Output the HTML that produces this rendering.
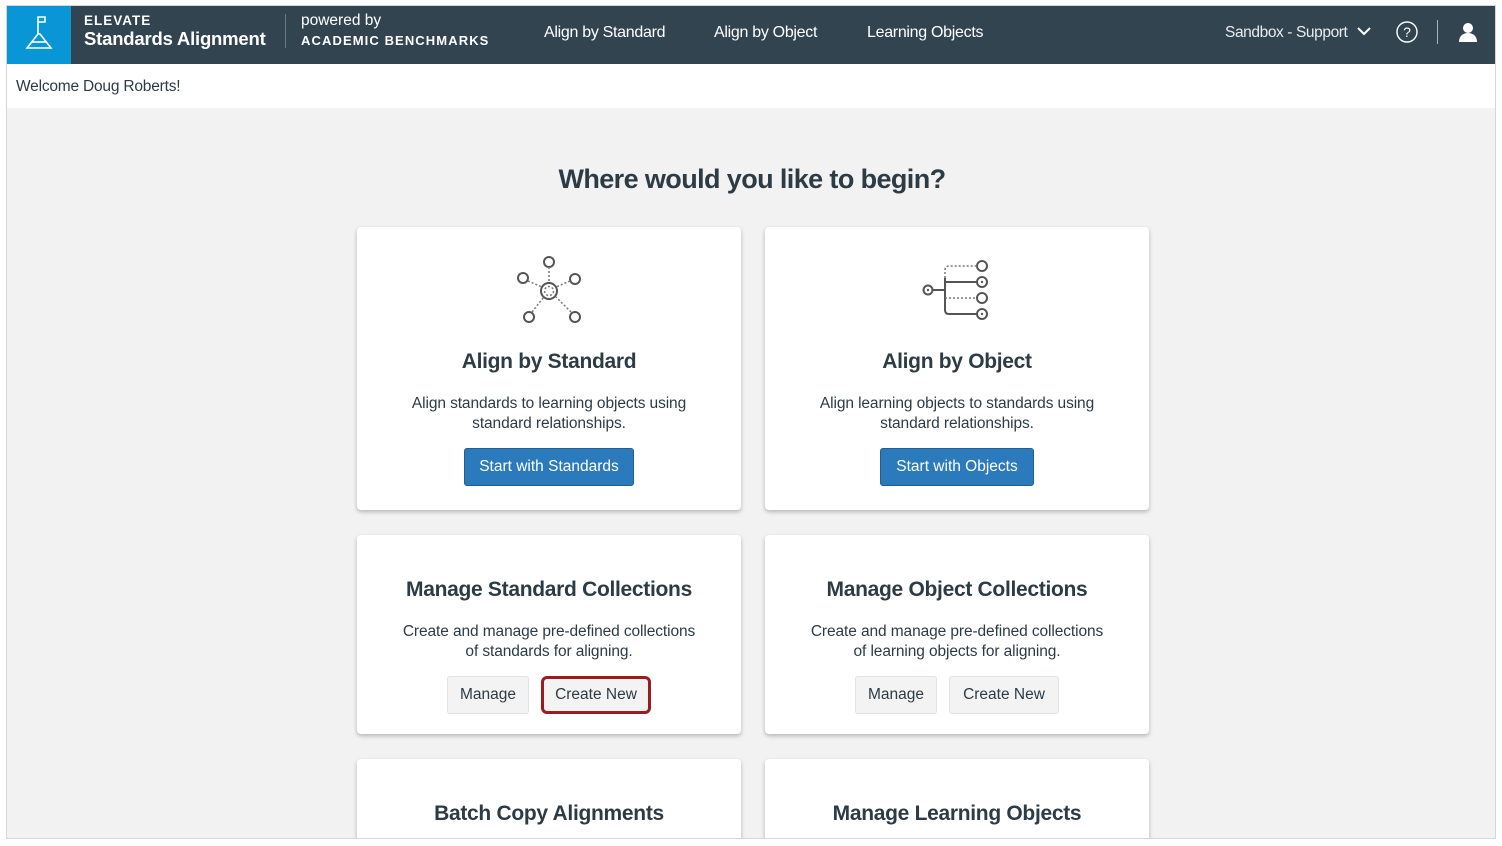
<!DOCTYPE html>
<html><head><meta charset="utf-8"><style>
*{box-sizing:border-box;margin:0;padding:0}
body{width:1502px;height:846px;background:#fff;font-family:"Liberation Sans",sans-serif;color:#2d3b45;position:relative;overflow:hidden}
.frame{position:absolute;left:6px;top:5px;width:1490px;height:834px;border:1px solid #d6d6d6;overflow:hidden;background:#f2f2f2}
.hdr{position:absolute;left:0;top:0;width:1490px;height:58px;background:#324450;color:#fff}
.logo{position:absolute;left:0;top:0;width:64px;height:58px;background:#0896d6}
.t{position:absolute;white-space:nowrap}
.welcome{position:absolute;left:0;top:58px;width:1490px;height:44px;background:#fff}
.card{position:absolute;background:#fff;border-radius:4px;box-shadow:0 2px 4px rgba(0,0,0,.25);text-align:center}
.card h2{position:absolute;left:0;right:0;font-size:21px;font-weight:bold;color:#2d3b45;letter-spacing:-.3px}
.card p{position:absolute;left:0;right:0;font-size:15.5px;line-height:19.5px;color:#2d3b45;letter-spacing:-.1px}
.btn{position:absolute;height:38px;border-radius:3px;font-size:15.5px;line-height:36px;text-align:center}
.blue{background:#2b7abc;color:#fff;border:1px solid #1f5f94}
.gray{background:#f3f3f3;color:#2d3b45;border:1px solid #e2e2e2}
</style></head><body>
<div class="frame">
 <div class="hdr">
  <div class="logo"><svg width="64" height="58" viewBox="0 0 64 58"><g fill="none" stroke="#fff" stroke-width="1.6"><path d="M31 28V11h7v5h-7"/><path d="M31 28L20 42h24L33 28z"/><path d="M24 36h16"/></g></svg></div>
  <div class="t" style="left:77px;top:7px;font-size:13.5px;font-weight:bold;letter-spacing:1px">ELEVATE</div>
  <div class="t" style="left:77px;top:22px;font-size:18.5px;font-weight:bold;letter-spacing:-.2px">Standards Alignment</div>
  <div style="position:absolute;left:278px;top:8px;width:1px;height:34px;background:#6b7a85"></div>
  <div class="t" style="left:294px;top:6px;font-size:15.5px">powered by</div>
  <div class="t" style="left:294px;top:27px;font-size:13px;font-weight:bold;letter-spacing:1.1px">ACADEMIC BENCHMARKS</div>
  <div class="t" style="left:537px;top:18px;font-size:16px;letter-spacing:-.3px">Align by Standard</div>
  <div class="t" style="left:707px;top:18px;font-size:16px;letter-spacing:-.3px">Align by Object</div>
  <div class="t" style="left:860px;top:18px;font-size:16px;letter-spacing:-.3px">Learning Objects</div>
  <div class="t" style="left:1218px;top:18px;font-size:15.5px;color:#e8ecef;letter-spacing:-.4px">Sandbox - Support</div>
  <svg style="position:absolute;left:1349px;top:19px" width="16" height="12"><path d="M2 3l6 6 6-6" fill="none" stroke="#fff" stroke-width="2"/></svg>
  <svg style="position:absolute;left:1388px;top:14px" width="24" height="24"><circle cx="12" cy="12" r="10" fill="none" stroke="#fff" stroke-width="1.4"/><text x="12" y="17" font-size="14" fill="#fff" text-anchor="middle" font-family="Liberation Sans">?</text></svg>
  <div style="position:absolute;left:1430px;top:14px;width:1px;height:24px;background:#aab4bb"></div>
  <svg style="position:absolute;left:1450px;top:15px" width="22" height="22"><circle cx="11" cy="7" r="5" fill="#fff"/><path d="M2 21c0-6 4-9 9-9s9 3 9 9z" fill="#fff"/></svg>
 </div>
 <div class="welcome"><div class="t" style="left:9px;top:14px;font-size:15.5px;color:#2d3b45;letter-spacing:-.2px">Welcome Doug Roberts!</div></div>
 <div class="t" style="left:0;width:1490px;text-align:center;top:158px;font-size:27px;font-weight:bold;color:#2d3b45;letter-spacing:-.6px">Where would you like to begin?</div>

 <div class="card" style="left:350px;top:221px;width:384px;height:283px">
  <svg style="position:absolute;left:156px;top:28px" width="72" height="72" viewBox="0 0 72 72"><g fill="none" stroke="#555" stroke-width="2"><circle cx="36" cy="7" r="5"/><circle cx="10" cy="23" r="5"/><circle cx="62" cy="24" r="5"/><circle cx="16" cy="62" r="5"/><circle cx="62" cy="62" r="5"/><circle cx="36" cy="36" r="8"/></g><g fill="none" stroke="#777" stroke-width="1.5" stroke-dasharray="2 2"><circle cx="36" cy="36" r="4.5"/><path d="M36 12v16M15 26l14 6M57 26l-14 6M19 57l11-14M58 57l-15-15"/></g></svg>
  <h2 style="top:123px">Align by Standard</h2>
  <p style="top:167px">Align standards to learning objects using<br>standard relationships.</p>
  <div class="btn blue" style="left:107px;top:221px;width:170px">Start with Standards</div>
 </div>
 <div class="card" style="left:758px;top:221px;width:384px;height:283px">
  <svg style="position:absolute;left:156px;top:30px" width="72" height="64" viewBox="0 0 72 64"><g fill="none" stroke="#555" stroke-width="2"><circle cx="7" cy="33" r="4.5"/><circle cx="61" cy="9" r="5"/><circle cx="61" cy="25" r="5"/><circle cx="61" cy="41" r="5"/><circle cx="61" cy="57" r="5"/><path d="M12 33h12M24 21v32q0 4 4 4h28M24 25h32"/></g><g fill="#555"><circle cx="61" cy="25" r="1.2"/><circle cx="61" cy="57" r="1.2"/><circle cx="7" cy="33" r="1.2"/></g><g fill="none" stroke="#777" stroke-width="1.5" stroke-dasharray="2 2"><path d="M24 21v-8q0-4 4-4h28M24 41h32"/></g></svg>
  <h2 style="top:123px">Align by Object</h2>
  <p style="top:167px">Align learning objects to standards using<br>standard relationships.</p>
  <div class="btn blue" style="left:115px;top:221px;width:154px">Start with Objects</div>
 </div>

 <div class="card" style="left:350px;top:529px;width:384px;height:199px">
  <h2 style="top:43px">Manage Standard Collections</h2>
  <p style="top:87px">Create and manage pre-defined collections<br>of standards for aligning.</p>
  <div class="btn gray" style="left:90px;top:141px;width:82px">Manage</div>
  <div class="btn" style="left:184px;top:141px;width:110px;border:3px solid #9b1b1e;border-radius:6px;line-height:32px;background:#f3f3f3">Create New</div>
 </div>
 <div class="card" style="left:758px;top:529px;width:384px;height:199px">
  <h2 style="top:43px">Manage Object Collections</h2>
  <p style="top:87px">Create and manage pre-defined collections<br>of learning objects for aligning.</p>
  <div class="btn gray" style="left:90px;top:141px;width:82px">Manage</div>
  <div class="btn gray" style="left:184px;top:141px;width:110px">Create New</div>
 </div>

 <div class="card" style="left:350px;top:753px;width:384px;height:120px">
  <h2 style="top:43px">Batch Copy Alignments</h2>
 </div>
 <div class="card" style="left:758px;top:753px;width:384px;height:120px">
  <h2 style="top:43px">Manage Learning Objects</h2>
 </div>
</div>
</body></html>
